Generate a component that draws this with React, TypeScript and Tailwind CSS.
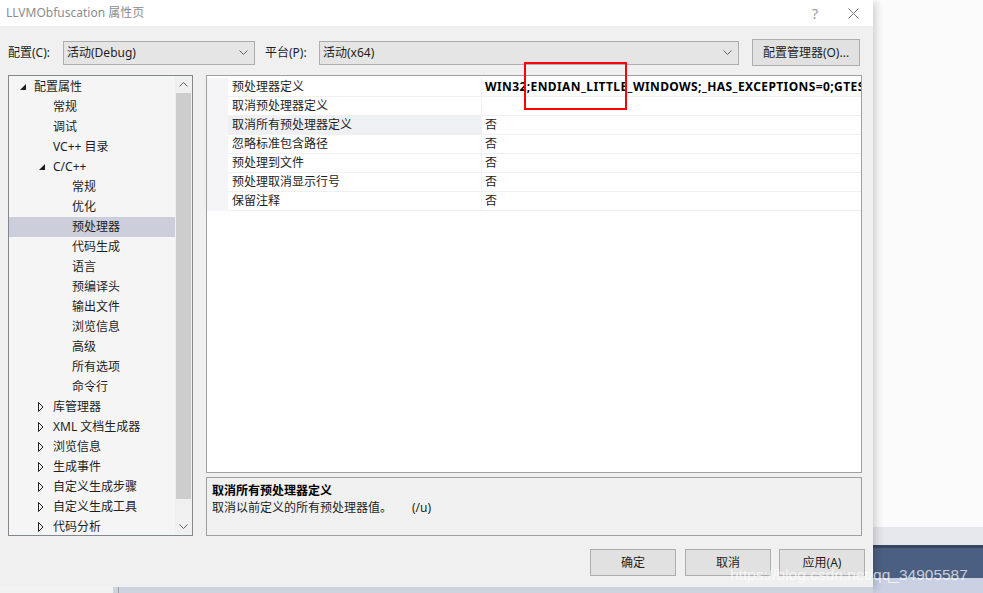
import React from "react"

type TreeItem = { label: string; level: 0 | 1 | 2; expand?: "open" | "closed"; selected?: boolean }

const treeItems: TreeItem[] = [
  { label: "配置属性", level: 0, expand: "open" },
  { label: "常规", level: 1 },
  { label: "调试", level: 1 },
  { label: "VC++ 目录", level: 1 },
  { label: "C/C++", level: 1, expand: "open" },
  { label: "常规", level: 2 },
  { label: "优化", level: 2 },
  { label: "预处理器", level: 2, selected: true },
  { label: "代码生成", level: 2 },
  { label: "语言", level: 2 },
  { label: "预编译头", level: 2 },
  { label: "输出文件", level: 2 },
  { label: "浏览信息", level: 2 },
  { label: "高级", level: 2 },
  { label: "所有选项", level: 2 },
  { label: "命令行", level: 2 },
  { label: "库管理器", level: 1, expand: "closed" },
  { label: "XML 文档生成器", level: 1, expand: "closed" },
  { label: "浏览信息", level: 1, expand: "closed" },
  { label: "生成事件", level: 1, expand: "closed" },
  { label: "自定义生成步骤", level: 1, expand: "closed" },
  { label: "自定义生成工具", level: 1, expand: "closed" },
  { label: "代码分析", level: 1, expand: "closed" },
]

const props = [
  { name: "预处理器定义", value: "WIN32;ENDIAN_LITTLE_WINDOWS;_HAS_EXCEPTIONS=0;GTEST_HAS_TR1_TUPLE=0", bold: true },
  { name: "取消预处理器定义", value: "" },
  { name: "取消所有预处理器定义", value: "否", selected: true },
  { name: "忽略标准包含路径", value: "否" },
  { name: "预处理到文件", value: "否" },
  { name: "预处理取消显示行号", value: "否" },
  { name: "保留注释", value: "否" },
]

const indent = { 0: "pl-[8px]", 1: "pl-[27px]", 2: "pl-[46px]" }

function Chevron({ up = false }: { up?: boolean }) {
  return (
    <svg width="9" height="5" viewBox="0 0 9 5" className={up ? "rotate-180" : ""}>
      <path d="M0.5 0.5 L4.5 4.5 L8.5 0.5" fill="none" stroke="#606060" strokeWidth="1" />
    </svg>
  )
}

function Combo({ text, width }: { text: string; width: string }) {
  return (
    <div className={`${width} h-[24px] flex items-center justify-between border border-[#adadad] bg-[#e5e5e5] pl-[3px] pr-[6px]`}>
      <span>{text}</span>
      <Chevron />
    </div>
  )
}

function Button({ children, width }: { children: React.ReactNode; width: string }) {
  return (
    <div className={`${width} h-[27px] flex items-center justify-center border border-[#adadad] bg-[#e1e1e1]`}>
      {children}
    </div>
  )
}

function TreeRow({ item }: { item: TreeItem }) {
  return (
    <div className={`h-[20px] flex items-center ${indent[item.level]} ${item.selected ? "bg-[#cccedb]" : ""}`}>
      <div className="w-[17px] h-[20px] flex items-center">
        {item.expand === "open" && (
          <svg width="6" height="6" viewBox="0 0 6 6" className="ml-[3px]">
            <path d="M0 6 L6 6 L6 0 Z" fill="#1e1e1e" />
          </svg>
        )}
        {item.expand === "closed" && (
          <svg width="6" height="10" viewBox="0 0 6 10" className="ml-[2px]">
            <path d="M0.5 0.5 L5 5 L0.5 9.5 Z" fill="none" stroke="#1e1e1e" strokeWidth="1" />
          </svg>
        )}
      </div>
      <span className="whitespace-nowrap">{item.label}</span>
    </div>
  )
}

export default function App() {
  return (
    <div
      className="w-[983px] h-[593px] flex overflow-hidden relative text-[12px] text-[#1e1e1e] bg-white"
      style={{ fontFamily: '"Noto Sans", "Noto Sans CJK SC", sans-serif' }}
    >
      {/* dialog + strip underneath */}
      <div className="w-[873px] flex flex-col relative z-10">
        <div className="h-[587px] flex flex-col bg-[#f0f0f0] shadow-[3px_2px_8px_rgba(0,0,0,0.18)]">
          {/* title bar */}
          <div className="h-[26px] bg-white flex items-center pl-[6px] pr-[14px] text-[#8c8c8c]">
            <span className="flex-1">LLVMObfuscation 属性页</span>
            <span className="text-[14px] mr-[30px] text-[#999]">?</span>
            <svg width="11" height="11" viewBox="0 0 11 11">
              <path d="M0.5 0.5 L10.5 10.5 M10.5 0.5 L0.5 10.5" stroke="#777" strokeWidth="1" />
            </svg>
          </div>

          <div className="flex-1 flex flex-col px-[8px]">
            {/* config row */}
            <div className="mt-[13px] h-[27px] flex items-center">
              <span className="w-[55px]">配置(C):</span>
              <Combo text="活动(Debug)" width="w-[192px]" />
              <span className="ml-[10px] w-[54px]">平台(P):</span>
              <Combo text="活动(x64)" width="w-[420px]" />
              <div className="ml-[13px]">
                <Button width="w-[108px]">配置管理器(O)...</Button>
              </div>
            </div>

            {/* main panels */}
            <div className="mt-[9px] flex gap-[13px]">
              {/* tree */}
              <div className="w-[185px] h-[461px] border border-[#828790] bg-[#f5f5f5] flex">
                <div className="flex-1 overflow-hidden pt-[1px]">
                  {treeItems.map((item, i) => (
                    <TreeRow key={i} item={item} />
                  ))}
                </div>
                <div className="w-[17px] bg-[#f0f0f0] flex flex-col items-center">
                  <div className="h-[17px] flex items-center justify-center">
                    <Chevron up />
                  </div>
                  <div className="w-[15px] h-[406px] bg-[#cdcdcd]" />
                  <div className="flex-1" />
                  <div className="h-[17px] flex items-center justify-center">
                    <Chevron />
                  </div>
                </div>
              </div>

              <div className="w-[656px] flex flex-col gap-[4px]">
                {/* property grid */}
                <div className="h-[398px] border border-[#a0a0a0] bg-white pt-[2px] overflow-hidden">
                  {props.map((p, i) => (
                    <div key={i} className="h-[19px] flex">
                      <div className="w-[21px] bg-[#f5f5f8]" />
                      <div
                        className={`w-[253px] flex items-center pl-[4px] border-b border-[#f0f0f0] ${
                          p.selected ? "bg-[#eff0f4]" : ""
                        }`}
                      >
                        {p.name}
                      </div>
                      <div className="flex-1 min-w-0 flex items-center pl-[3px] border-b border-l border-[#f0f0f0] overflow-hidden">
                        <span className={`whitespace-nowrap ${p.bold ? "font-bold text-black tracking-[0.4px]" : ""}`}>
                          {p.value}
                        </span>
                      </div>
                    </div>
                  ))}
                </div>
                {/* description */}
                <div className="h-[59px] border border-[#a0a0a0] bg-[#f0f0f0] pl-[5px] pt-[4px] leading-[17px]">
                  <div className="font-bold text-black">取消所有预处理器定义</div>
                  <div className="flex">
                    <span className="w-[200px]">取消以前定义的所有预处理器值。</span>
                    <span>(/u)</span>
                  </div>
                </div>
              </div>
            </div>

            {/* buttons */}
            <div className="mt-[13px] flex justify-end">
              <Button width="w-[86px]">确定</Button>
              <div className="ml-[9px]">
                <Button width="w-[86px]">取消</Button>
              </div>
              <div className="ml-[8px]">
                <Button width="w-[86px]">应用(A)</Button>
              </div>
            </div>
          </div>
        </div>

        {/* toolbar strip below dialog */}
        <div className="h-[6px] flex bg-[#cfd3dd]">
          <div className="w-[113px] bg-[#f2f2f2]" />
          <div className="w-[6px] border-r border-[#9aa0ac]" />
        </div>
      </div>

      {/* background window on the right */}
      <div className="flex-1 flex flex-col">
        <div className="h-[527px] bg-[#fbfbfb]" />
        <div className="h-[18px] bg-[#e6e7ec]" />
        <div className="h-[3px] bg-[#364562]" />
        <div className="h-[30px] bg-[#4b5f82]" />
        <div className="flex-1 bg-[#c9d1e3]" />
      </div>

      {/* red highlight rectangle */}
      <div className="absolute left-[524px] top-[62px] w-[103px] h-[48px] border-[2px] border-[#ff0000] z-20" />

      {/* watermark */}
      <div
        className="absolute left-[730px] top-[563px] text-[15.5px] text-white/70 z-20 whitespace-nowrap"
        style={{ fontFamily: '"Liberation Sans", Arial, sans-serif' }}
      >
        https://blog.csdn.net/qq_34905587
      </div>
    </div>
  )
}
